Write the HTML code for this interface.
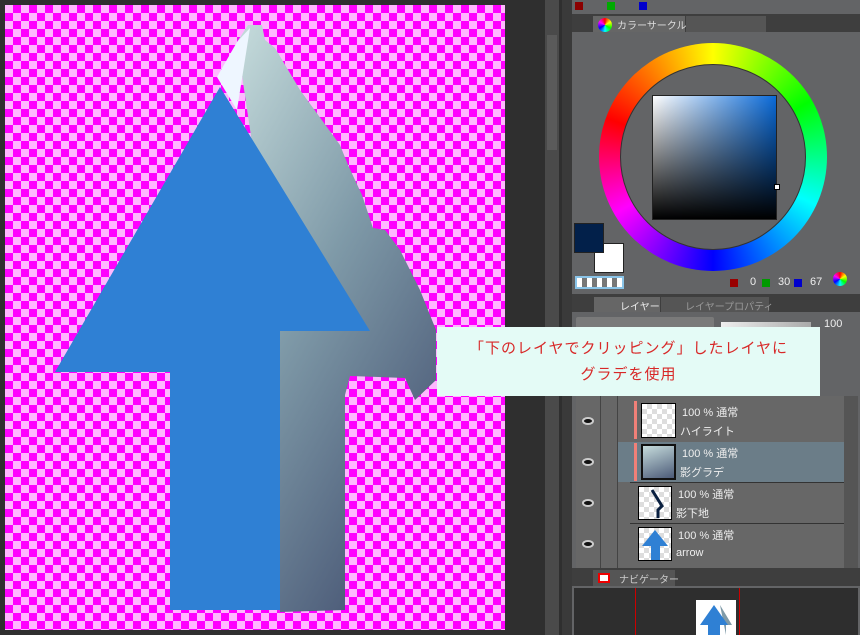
<!DOCTYPE html>
<html><head><meta charset="utf-8"><style>
*{margin:0;padding:0;box-sizing:border-box}
body{width:860px;height:635px;overflow:hidden;background:#2f2f2f;position:relative;font-family:"Liberation Sans","Noto Sans CJK JP",sans-serif}
.abs{position:absolute;white-space:nowrap}
.chk{left:5px;top:5px;width:500px;height:625px;background-color:#ffb8ff;background-image:linear-gradient(45deg,#ff00ff 25%,transparent 25%,transparent 75%,#ff00ff 75%),linear-gradient(45deg,#ff00ff 25%,transparent 25%,transparent 75%,#ff00ff 75%);background-size:16px 16px;background-position:0 0,8px 8px}
.txt{color:#eee;font-size:11px}
</style></head><body>
<div class="abs chk"></div>
<svg class="abs" style="left:0;top:0" width="510" height="635">
<defs><linearGradient id="g" x1="0" y1="0" x2="0.6" y2="1"><stop offset="0" stop-color="#c6dcdc"/><stop offset="0.5" stop-color="#7f9aa8"/><stop offset="1" stop-color="#4c5b78"/></linearGradient></defs>
<polygon fill="url(#g)" points="237,42 248,25 262,25 265,40 275,48 300,90 340,145 348,165 362,195 373,228 385,230 400,250 420,290 436,330 436,380 415,400 405,378 350,376 345,395 345,610 280,612 280,331"/>
<polygon fill="#eef6ff" points="217,77 237,42 250,28 237,110"/>
<polygon fill="#2f80d4" points="220,87 370,331 280,331 280,610 170,610 170,372 55,372"/>
</svg>
<div class="abs" style="left:545px;top:0;width:14px;height:635px;background:#4a4a4a"></div>
<div class="abs" style="left:547px;top:35px;width:10px;height:115px;background:#5a5a5a"></div>
<div class="abs" style="left:562px;top:0;width:10px;height:635px;background:#3a3a3a"></div>
<!-- right panel -->
<div class="abs" style="left:572px;top:0;width:288px;height:635px;background:#636466"></div>
<div class="abs" style="left:575px;top:2px;width:8px;height:8px;background:#8b0000"></div>
<div class="abs" style="left:607px;top:2px;width:8px;height:8px;background:#0a0"></div>
<div class="abs" style="left:639px;top:2px;width:8px;height:8px;background:#00c"></div>
<div class="abs" style="left:572px;top:14px;width:288px;height:18px;background:#3e3e3e"></div>
<div class="abs txt" style="left:593px;top:16px;width:92px;height:16px;background:#666;padding:1px 0 0 24px;font-size:10px;color:#ddd">カラーサークル</div>
<div class="abs" style="left:598px;top:18px;width:14px;height:14px;border-radius:50%;background:conic-gradient(red,yellow,lime,cyan,blue,magenta,red)"></div>
<div class="abs" style="left:686px;top:16px;width:80px;height:16px;background:#555"></div>
<div class="abs" style="left:599px;top:43px;width:228px;height:228px;border-radius:50%;background:conic-gradient(#ff0 0deg,#0f0 60deg,#0ff 115deg,#00f 180deg,#f0f 240deg,#f00 290deg,#ff0 360deg)"></div>
<div class="abs" style="left:620px;top:64px;width:186px;height:186px;border-radius:50%;background:#636466;border:1px solid #333"></div>
<div class="abs" style="left:652px;top:95px;width:125px;height:125px;background:linear-gradient(to bottom,transparent,#000),linear-gradient(to right,#fff,#0a6ad8);border:1px solid #222"></div>
<div class="abs" style="left:774px;top:184px;width:6px;height:6px;border:1px solid #000;background:#fff"></div>
<div class="abs" style="left:594px;top:243px;width:30px;height:30px;background:#fff;border:1px solid #222"></div>
<div class="abs" style="left:574px;top:223px;width:30px;height:30px;background:#02204a;border:1px solid #222"></div>
<div class="abs" style="left:575px;top:276px;width:49px;height:13px;border:2px solid #8ac4e8;background:repeating-linear-gradient(90deg,#fff 0 5px,#777 5px 10px)"></div>
<div class="abs" style="left:730px;top:279px;width:8px;height:8px;background:#900"></div>
<div class="abs txt" style="left:750px;top:276px">0</div>
<div class="abs" style="left:762px;top:279px;width:8px;height:8px;background:#090"></div>
<div class="abs txt" style="left:778px;top:276px">30</div>
<div class="abs" style="left:794px;top:279px;width:8px;height:8px;background:#00c"></div>
<div class="abs txt" style="left:810px;top:276px">67</div>
<div class="abs" style="left:833px;top:272px;width:14px;height:14px;border-radius:50%;background:conic-gradient(red,yellow,lime,cyan,blue,magenta,red)"></div>
<div class="abs" style="left:572px;top:294px;width:288px;height:18px;background:#3e3e3e"></div>
<div class="abs txt" style="left:594px;top:297px;width:66px;height:15px;background:#666;padding:1px 0 0 26px;font-size:10px">レイヤー</div>
<div class="abs txt" style="left:661px;top:297px;width:108px;height:15px;background:#555;padding:1px 0 0 24px;font-size:10px;color:#999">レイヤープロパティ</div>
<div class="abs" style="left:576px;top:317px;width:138px;height:14px;background:#7a7a7a;border-radius:2px"></div>
<div class="abs" style="left:721px;top:322px;width:90px;height:10px;background:linear-gradient(90deg,#eee,#aaa)"></div>
<div class="abs txt" style="left:824px;top:318px">100</div>
<!-- layers -->
<div class="abs" style="left:576px;top:396px;width:268px;height:182px;background:#676767"></div>
<div class="abs" style="left:600px;top:396px;width:1px;height:182px;background:#444"></div>
<div class="abs" style="left:617px;top:396px;width:1px;height:182px;background:#444"></div>
<div class="abs" style="left:844px;top:396px;width:14px;height:182px;background:#555"></div>
<div class="abs" style="left:618px;top:442px;width:226px;height:40px;background:#6b7d88"></div>
<div class="abs" style="left:634px;top:401px;width:3px;height:38px;background:#f08078"></div>
<div class="abs" style="left:634px;top:443px;width:3px;height:38px;background:#f08078"></div>
<div class="abs" style="left:641px;top:403px;width:35px;height:35px;border:1px solid #000;background:repeating-conic-gradient(#ddd 0 25%,#fff 0 50%) 0 0/10px 10px"></div>
<div class="abs" style="left:641px;top:444px;width:35px;height:36px;border:2px solid #111;background:linear-gradient(160deg,#c6dcdc,#4c5b78)"></div>
<div class="abs" style="left:638px;top:486px;width:34px;height:34px;border:1px solid #000;background:repeating-conic-gradient(#ddd 0 25%,#fff 0 50%) 0 0/10px 10px"></div>
<div class="abs" style="left:638px;top:527px;width:34px;height:34px;border:1px solid #000;background:repeating-conic-gradient(#ddd 0 25%,#fff 0 50%) 0 0/10px 10px"></div>
<svg class="abs" style="left:638px;top:486px" width="34" height="75"><polyline points="14,4 24,20 20,24 20,32" stroke="#0a2040" stroke-width="3" fill="none"/><polygon points="17,44 30,60 22,60 22,74 13,74 13,60 4,60" fill="#2f80d4"/></svg>
<div class="abs" style="left:630px;top:482px;width:214px;height:1px;background:#333"></div>
<div class="abs" style="left:630px;top:523px;width:214px;height:1px;background:#333"></div>
<div class="abs txt" style="left:682px;top:404px">100 % 通常</div>
<div class="abs txt" style="left:680px;top:423px">ハイライト</div>
<div class="abs txt" style="left:682px;top:445px">100 % 通常</div>
<div class="abs txt" style="left:680px;top:464px">影グラデ</div>
<div class="abs txt" style="left:678px;top:486px">100 % 通常</div>
<div class="abs txt" style="left:676px;top:505px">影下地</div>
<div class="abs txt" style="left:678px;top:527px">100 % 通常</div>
<div class="abs txt" style="left:676px;top:547px">arrow</div>
<div class="abs" style="left:582px;top:417px;width:12px;height:8px;border-radius:50%;background:#111;border:2px solid #ccc"></div>
<div class="abs" style="left:582px;top:458px;width:12px;height:8px;border-radius:50%;background:#111;border:2px solid #ccc"></div>
<div class="abs" style="left:582px;top:499px;width:12px;height:8px;border-radius:50%;background:#111;border:2px solid #ccc"></div>
<div class="abs" style="left:582px;top:540px;width:12px;height:8px;border-radius:50%;background:#111;border:2px solid #ccc"></div>
<div class="abs" style="left:572px;top:568px;width:288px;height:18px;background:#3e3e3e"></div>
<div class="abs txt" style="left:593px;top:570px;width:82px;height:16px;background:#555;padding:1px 0 0 26px;font-size:10px;color:#ccc">ナビゲーター</div>
<div class="abs" style="left:598px;top:573px;width:12px;height:10px;border:2px solid #e00;background:#fff"></div>
<div class="abs" style="left:574px;top:588px;width:284px;height:47px;background:#2e2e2e"></div>
<div class="abs" style="left:635px;top:588px;width:1px;height:47px;background:#c00"></div>
<div class="abs" style="left:739px;top:588px;width:1px;height:47px;background:#c00"></div>
<div class="abs" style="left:696px;top:600px;width:40px;height:35px;background:#fff"></div>
<svg class="abs" style="left:696px;top:600px" width="40" height="35"><polygon points="24,5 36,25 30,25 30,35" fill="#7f9aa8"/><polygon points="18,5 32,25 24,25 24,35 12,35 12,25 4,25" fill="#2f80d4"/></svg>
<!-- callout -->
<div class="abs" style="left:437px;top:327px;width:383px;height:69px;background:#e4fbf6;color:#d82828;font-size:15px;text-align:center;line-height:26px;padding-top:9px;letter-spacing:1px">「下のレイヤでクリッピング」したレイヤに<br>グラデを使用</div>
</body></html>
